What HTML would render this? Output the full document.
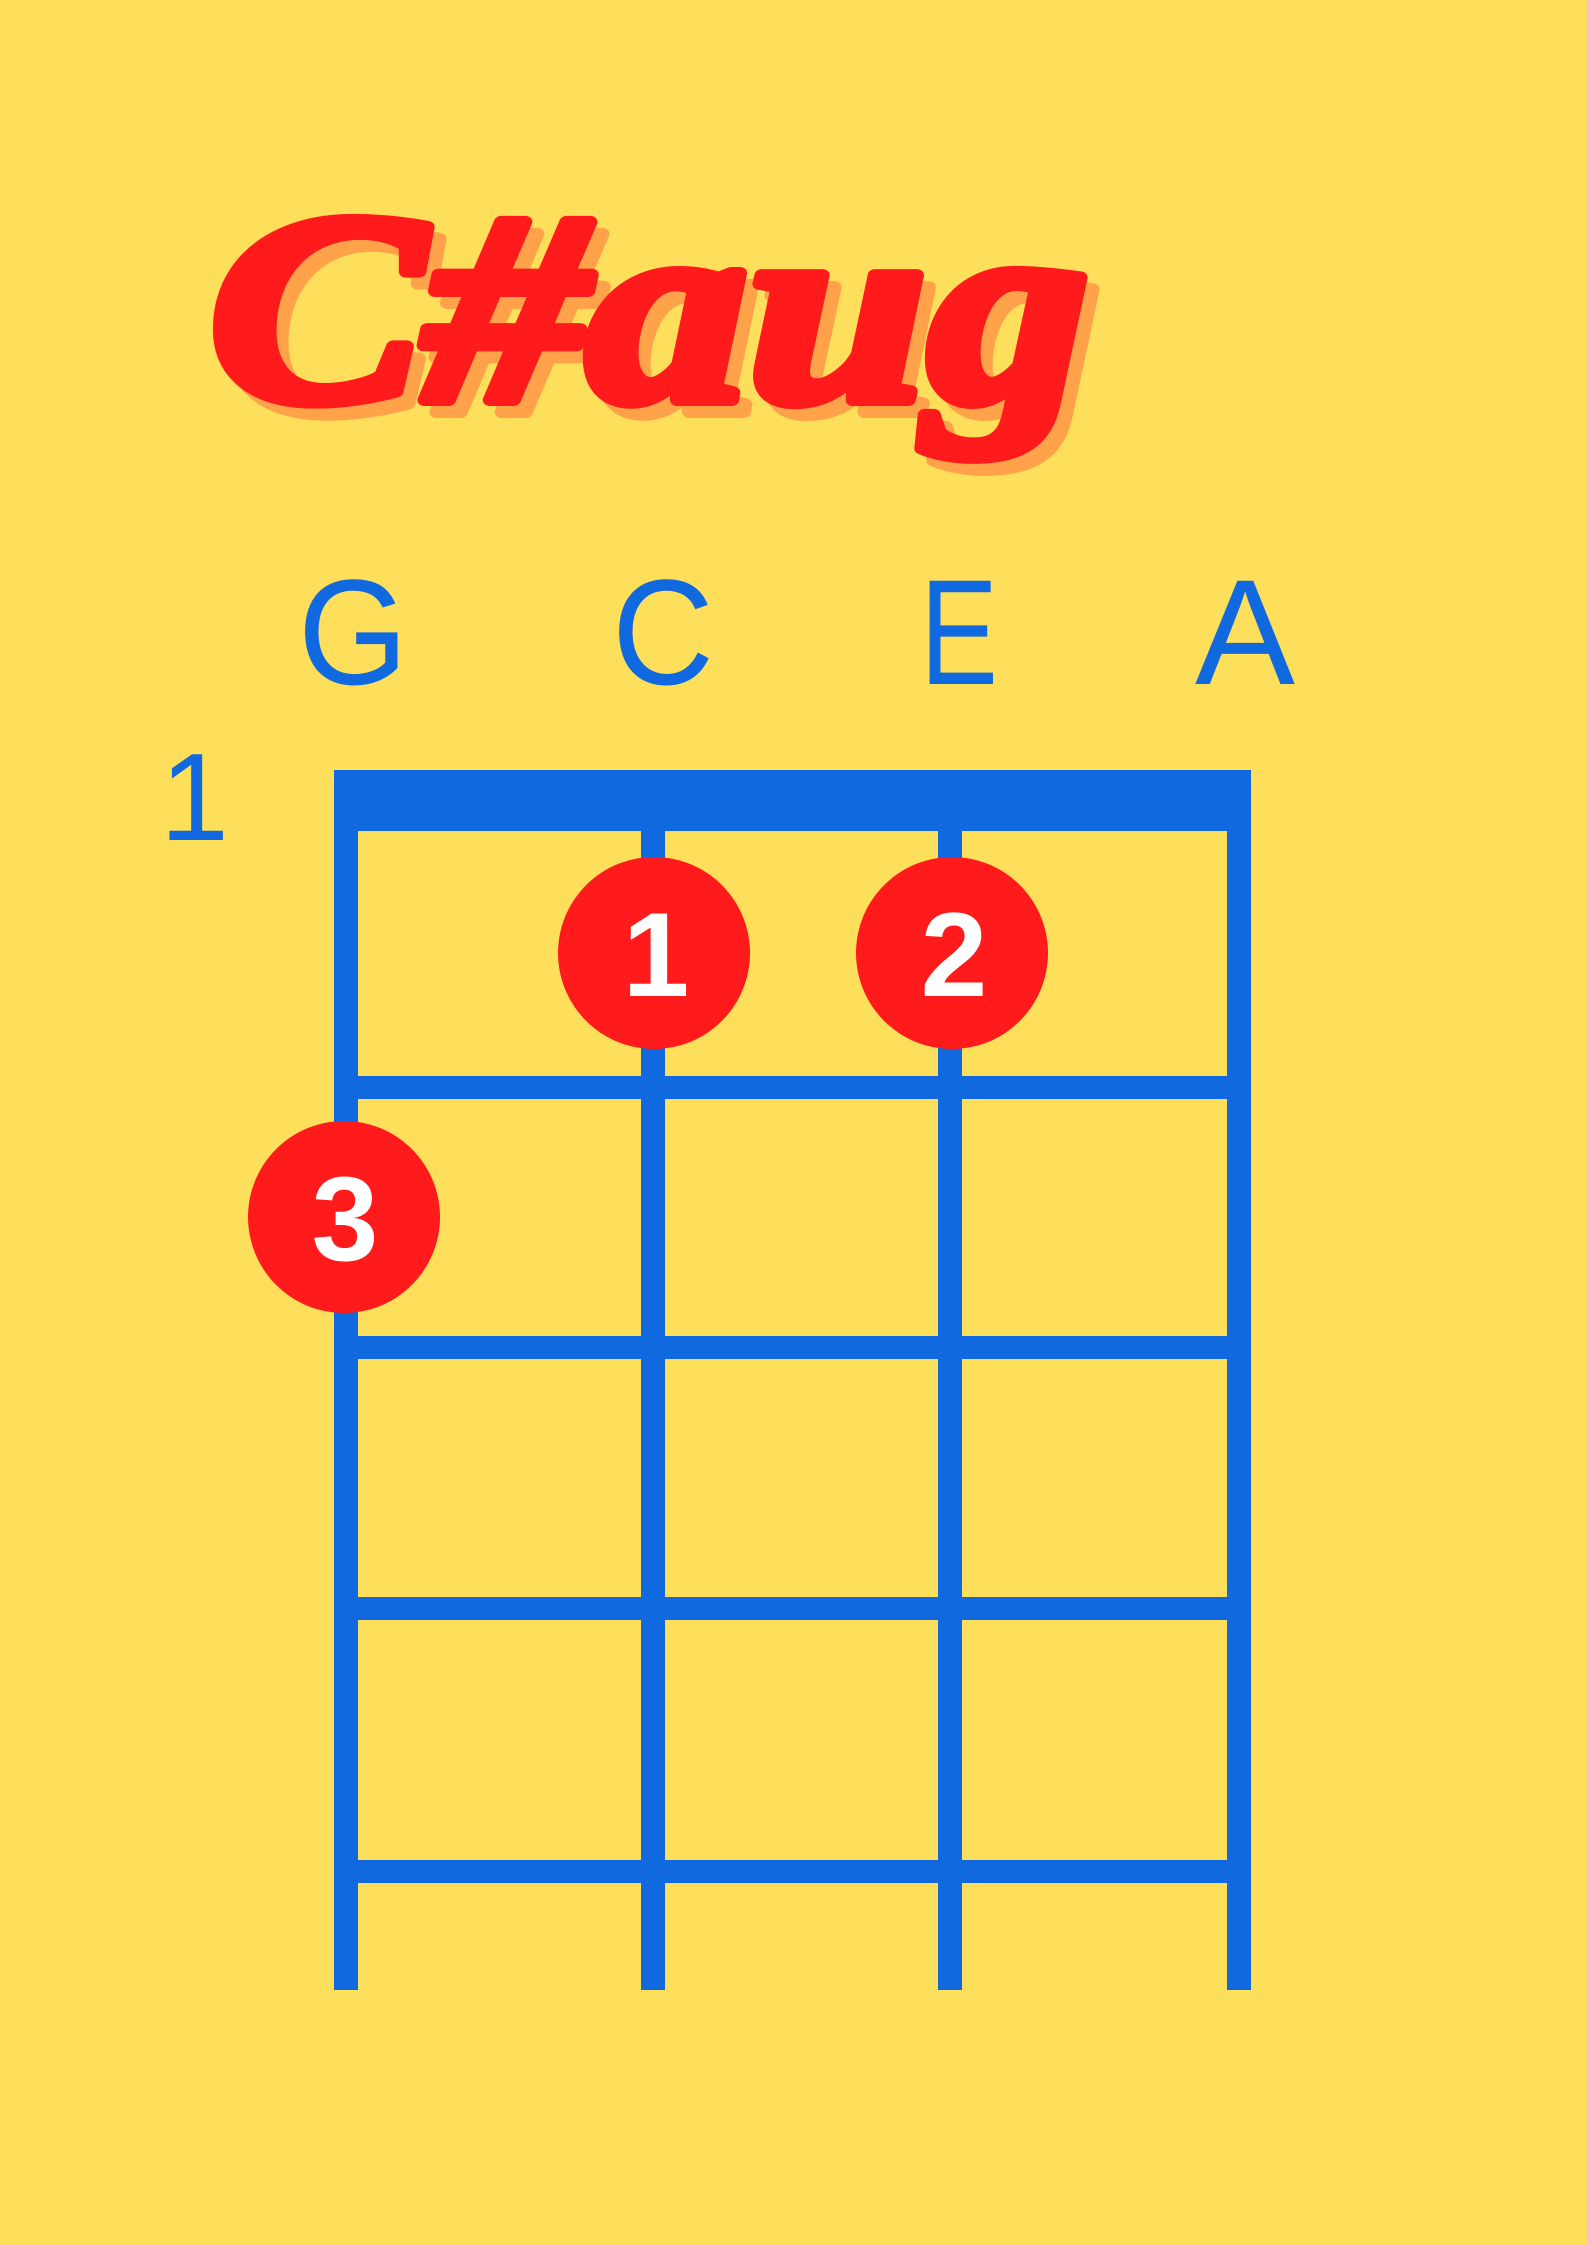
<!DOCTYPE html>
<html><head><meta charset="utf-8"><style>
html,body{margin:0;padding:0}
body{width:1587px;height:2245px;background:#FEDF5C;overflow:hidden;position:relative}
svg{position:absolute;left:0;top:0}
</style></head><body>
<svg width="1587" height="2245" viewBox="0 0 1587 2245">
<g font-family="Liberation Serif, serif" font-weight="bold" font-style="italic" font-size="272" stroke-linejoin="round">
<text x="221" y="412" fill="#FFA24A" stroke="#FFA24A" stroke-width="12" textLength="880" lengthAdjust="spacingAndGlyphs">C#aug</text>
<text x="209" y="400" fill="#FF1B1B" stroke="#FF1B1B" stroke-width="12" textLength="880" lengthAdjust="spacingAndGlyphs">C#aug</text>
</g>
<g font-family="Liberation Sans, sans-serif" font-size="150" fill="#1169E0">
<text x="298" y="684" textLength="110" lengthAdjust="spacingAndGlyphs">G</text>
<text x="612" y="684" textLength="102" lengthAdjust="spacingAndGlyphs">C</text>
<text x="920" y="684" textLength="78" lengthAdjust="spacingAndGlyphs">E</text>
<text x="1195" y="684" textLength="100" lengthAdjust="spacingAndGlyphs">A</text>
<text x="160" y="840" font-size="124">1</text>
</g>
<g fill="#1169E0">
<rect x="334" y="770" width="917" height="61"/>
<rect x="334" y="770" width="24" height="1220"/>
<rect x="641" y="770" width="24" height="1220"/>
<rect x="938" y="770" width="24" height="1220"/>
<rect x="1227" y="770" width="24" height="1220"/>
<rect x="334" y="1076" width="917" height="23"/>
<rect x="334" y="1336" width="917" height="23"/>
<rect x="334" y="1597" width="917" height="23"/>
<rect x="334" y="1860" width="917" height="23"/>
</g>
<g fill="#FF1B1B">
<circle cx="654" cy="953" r="96"/>
<circle cx="952" cy="953" r="96"/>
<circle cx="344" cy="1217" r="96"/>
</g>
<g font-family="Liberation Sans, sans-serif" font-weight="bold" font-size="120" fill="#fff" text-anchor="middle">
<text x="656" y="996">1</text>
<text x="954" y="996">2</text>
<text x="345" y="1260">3</text>
</g>
</svg>
</body></html>
